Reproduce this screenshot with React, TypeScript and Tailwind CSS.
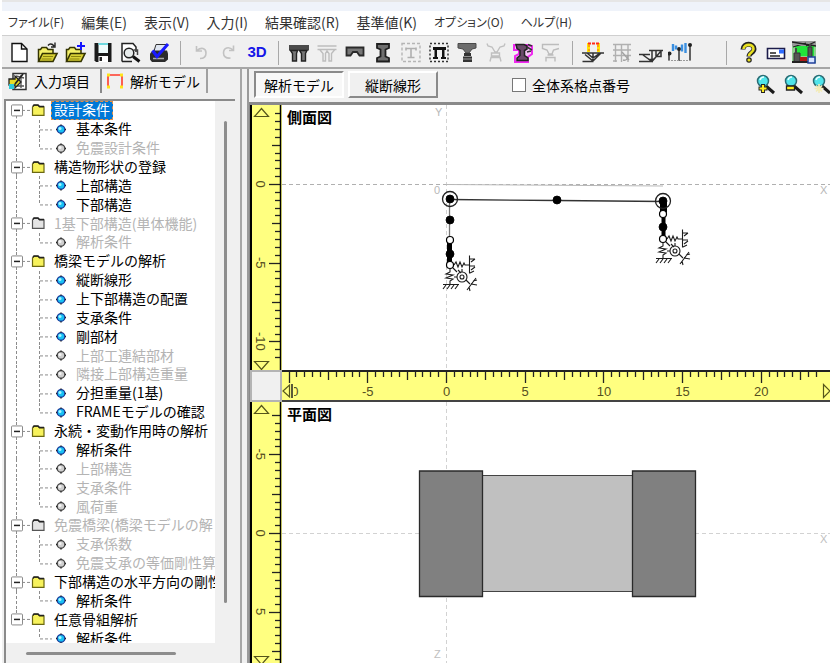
import { useState } from 'react'
import type { ReactNode } from 'react'

type Leaf  = { label: string; off?: boolean }
type Group = { label: string; off?: boolean; items: Leaf[] }

const MENUS = [
  { label: 'ファイル(F)', kana: true },
  { label: '編集(E)' },
  { label: '表示(V)' },
  { label: '入力(I)' },
  { label: '結果確認(R)' },
  { label: '基準値(K)' },
  { label: 'オプション(O)', kana: true },
  { label: 'ヘルプ(H)', kana: true },
]

const TREE: Group[] = [
  { label: '設計条件', items: [{ label: '基本条件' }, { label: '免震設計条件', off: true }] },
  { label: '構造物形状の登録', items: [{ label: '上部構造' }, { label: '下部構造' }] },
  { label: '1基下部構造(単体機能)', off: true, items: [{ label: '解析条件', off: true }] },
  {
    label: '橋梁モデルの解析',
    items: [
      { label: '縦断線形' },
      { label: '上下部構造の配置' },
      { label: '支承条件' },
      { label: '剛部材' },
      { label: '上部工連結部材', off: true },
      { label: '隣接上部構造重量', off: true },
      { label: '分担重量(1基)' },
      { label: 'FRAMEモデルの確認' },
    ],
  },
  {
    label: '永続・変動作用時の解析',
    items: [
      { label: '解析条件' },
      { label: '上部構造', off: true },
      { label: '支承条件', off: true },
      { label: '風荷重', off: true },
    ],
  },
  {
    label: '免震橋梁(橋梁モデルの解',
    off: true,
    items: [{ label: '支承係数', off: true }, { label: '免震支承の等価剛性算', off: true }],
  },
  { label: '下部構造の水平方向の剛性', items: [{ label: '解析条件' }] },
  { label: '任意骨組解析', items: [{ label: '解析条件' }] },
]

/* ---------- toolbar icons ---------- */

const Icon = ({ children }: { children: ReactNode }) => (
  <svg width="24" height="24" viewBox="0 0 24 24" fill="none" className="shrink-0">{children}</svg>
)

const NewIcon = () => (
  <Icon>
    <path d="M5 2.5h9.5L20 8v12.5H5z" fill="#fff" stroke="#111" strokeWidth="1.4" />
    <path d="M14.5 2.5V8H20" stroke="#111" strokeWidth="1.4" />
  </Icon>
)

const FolderShape = () => (
  <>
    <path d="M3.5 20V8.5h2L7 6.5h4.5l1.5 2h5V13" fill="#f4f06a" stroke="#333300" strokeWidth="1.5" />
    <path d="M3.5 20.5 7.5 12.5H22l-4 8z" fill="#d8d034" stroke="#333300" strokeWidth="1.6" />
    <path d="M8 15.5h10M6.5 18h10" stroke="#8a8410" strokeWidth="1" />
  </>
)

const OpenIcon = () => (
  <Icon>
    <FolderShape />
    <path d="M13 4.5c1.5-2 4-2 6 .5M20 1.5V6h-4" stroke="#222" strokeWidth="1.4" />
  </Icon>
)

const OpenAddIcon = () => (
  <Icon>
    <FolderShape />
    <path d="M18 1v8M14 5h8" stroke="#1414ff" strokeWidth="2" />
  </Icon>
)

const SaveIcon = () => (
  <Icon>
    <path d="M3.5 2h17v19H5l-1.5-1.5z" fill="#1a1a1a" />
    <path d="M7.5 2h9.5v10H7.5z" fill="#effcfc" />
    <path d="M7.5 2h9.5v2H7.5z" fill="#6fd9df" />
    <path d="M7.500 15h9.500v6h-9.500z" fill="#fff" />
    <path d="M8.500 16h2.500v4h-2.500z" fill="#222" />
  </Icon>
)

const PreviewIcon = () => (
  <Icon>
    <path d="M3 20.500V2.500h11l3 3.500v5M3 20.500h10" fill="#fff" stroke="#222" strokeWidth="1.500" />
    <circle cx="10" cy="12" r="4.800" fill="#e8ecec" stroke="#222" strokeWidth="1.500" />
    <path d="m14 15.500 6.500 5" stroke="#111" strokeWidth="3" />
    <path d="M14.500 9h4v5" stroke="#444" strokeWidth="1.500" />
  </Icon>
)

const PrintIcon = () => (
  <Icon>
    <path d="M3 12.500 6 9.500h14l1 3v6L18 21H5l-2-2.500z" fill="#2c2c2c" />
    <path d="M7 10 9 3.500h10L17 10z" fill="#dfe6f2" stroke="#333" strokeWidth="1" />
    <path d="M6 17.500h11" stroke="#aaa" strokeWidth="1.500" />
    <path d="m5.500 9.500 4.500 6L21 3" stroke="#1a1aff" strokeWidth="3" />
  </Icon>
)

const UndoIcon = () => (
  <Icon>
    <path d="M7.500 5v5H13M8 9.500c4-3.500 9-2.500 9 2.500 0 3.500-2.500 5.500-6 5.500" stroke="#c2c2c2" strokeWidth="1.600" />
  </Icon>
)

const RedoIcon = () => (
  <Icon>
    <path d="M16.500 4.500v5H12M16 9C12 5 6.500 6.500 6.500 12c0 3.500 2.500 5.500 7 5" stroke="#c2c2c2" strokeWidth="1.600" />
  </Icon>
)

const PierPairIcon = ({ off = false }: { off?: boolean }) => (
  <Icon>
    {off ? (
      <path d="M2.500 5h19M2.500 8.500h19M5 9l3 3.500V20h2.500v-7.500L12 10l2 2.500V20h2.500v-7.500L19.500 9" stroke="#bdbdbd" strokeWidth="1.400" />
    ) : (
      <>
        <path d="M2 4h20v5.500H2z" fill="#4a4a4a" />
        <path d="M3.500 9.500h7l-1 3V20h-4v-7.500zM12.500 9.500h7.500l-1.500 3V20h-4v-7.500z" fill="#777" stroke="#222" strokeWidth="1.400" />
      </>
    )}
  </Icon>
)

const ArchIcon = () => (
  <Icon>
    <path d="M3.500 6.500h17v8h-4L14 11h-4l-2.500 3.500h-4z" fill="#777" stroke="#2a2a2a" strokeWidth="1.800" />
  </Icon>
)

const ColumnIcon = () => (
  <Icon>
    <path d="M6 3h12v4l-3.500 1.500v7L18 17v3.500H6V17l3.500-1.500v-7L6 7z" fill="#6e6e6e" stroke="#1f1f1f" strokeWidth="1.800" />
  </Icon>
)

const FrameTIcon = () => (
  <Icon>
    <path d="M3 2.500h18v18H3z" stroke="#b5b5b5" strokeWidth="1.400" strokeDasharray="3 2" />
    <path d="M7 7.500h10M7 6.500v3M17 6.500v3M12 7.500v8.500M8.500 16.500h7" stroke="#b0b0b0" strokeWidth="1.600" />
  </Icon>
)

const FramePiIcon = () => (
  <Icon>
    <path d="M3 2.500h18v18H3z" stroke="#333" strokeWidth="1.500" strokeDasharray="2 2" />
    <path d="M6 6h13v3h-1.500v7h1.500v2h-5v-2h1V9h-5v7h1v2H6v-2h1.500V9H6z" fill="#111" />
  </Icon>
)

const BearingIcon = () => (
  <Icon>
    <path d="M3 2.500h18V7l-4 1-3 4h-3L8 8 3 7z" fill="#6d6d6d" stroke="#4a4a4a" />
    <path d="M9 12h7v3H9zM8 15.500h9v5.500H8z" fill="#333" />
    <path d="M8 18h9" stroke="#999" />
  </Icon>
)

const BearingOffIcon = () => (
  <Icon>
    <path d="M4 2.500 5 5l4 1 3 5h2l3-5 4-1 1-2.500M8.500 12h8v3h-8zM7 20.500l1-4h9l1 4" stroke="#c0c0c0" strokeWidth="1.400" />
  </Icon>
)

const SeismicIcon = () => (
  <Icon>
    <path d="M3 4h13l5 1v8l-4 3v5H4v-6l4-2V9H3z" fill="#f6c3f6" stroke="#f028f0" strokeWidth="2" />
    <path d="M5 3.500h8l3 1.500v3l-2.500 1.500v5L17 17v2.500H6V17l3-2.500v-5L6 7.500z" fill="#6a4a6a" stroke="#222" strokeWidth="1.500" />
    <path d="M16 6l5 3M16 11l4-1M17 3.500l4 1.500" stroke="#333" strokeWidth="1.500" />
  </Icon>
)

const StepOffIcon = () => (
  <Icon>
    <path d="M20 3.500H3.500v4L8 9l2 4h3l1.500-4L20 7.500M8.500 14h6M7 20.500v-4h9v4" stroke="#bcbcbc" strokeWidth="1.400" />
  </Icon>
)

const MomentShape = () => (
  <path d="M1 12h22M4 13.500l8 6.500 8-8M12 12v8M6 12l6 5 7-5M1.500 20.500h11" stroke="#333" strokeWidth="1.500" />
)

const MomentFrameIcon = () => (
  <Icon>
    <path d="M7.500 2v9M17.500 2v9" stroke="#ffe600" strokeWidth="3" />
    <path d="M7 2.500h11" stroke="#ff2a1a" strokeWidth="2" strokeDasharray="3 1" />
    <path d="M8 4v6M17 4v6" stroke="#ff5a1a" strokeDasharray="2 2" />
    <MomentShape />
  </Icon>
)

const GridOffIcon = () => (
  <Icon>
    <path d="M3 3.500h18M3 9h18M3 14.500h18M3 20h4M5.500 3v18M11.500 3v18M18 3v18" stroke="#b0b0b0" strokeWidth="1.400" />
    <path d="m12 11 7 8M13 19c3 1 5-1 5-5" stroke="#a2a2a2" strokeWidth="1.400" />
  </Icon>
)

const MomentIcon = () => (
  <Icon>
    <path d="M10 9.500h14M0 13.500h11M0 20.500h14M4 14l9 6.500L22 10M13 9.500v11M17 9.500v6h5v-6" stroke="#333" strokeWidth="1.500" />
    <path d="m9 18 4 2.500 2-3z" fill="#333" />
  </Icon>
)

const GraphIcon = () => (
  <Icon>
    <path d="M1 13v6M11 7v13M22 4v16" stroke="#333" strokeWidth="1.500" />
    <circle cx="1.500" cy="12.500" r="2" fill="#222" />
    <circle cx="11" cy="8" r="2" fill="#222" />
    <circle cx="22" cy="4" r="2" fill="#222" />
    <path d="M5 3v7M8 4.500v4M14 3.500v7M17.500 2v10" stroke="#3a8fe0" strokeWidth="2.400" />
    <path d="M0 19.500h24" stroke="#9a9a9a" strokeDasharray="2 1" />
  </Icon>
)

const HelpIcon = () => (
  <Icon>
    <path d="M7 8.500C7 1.500 18 1.500 18 8c0 4-5 3.500-5 7.500" stroke="#222" strokeWidth="5" />
    <path d="M7.500 8C8 2.500 17.500 2.500 17.500 8c0 3.500-4.500 3.500-4.500 7" stroke="#e8e020" strokeWidth="2.600" />
    <circle cx="13" cy="19" r="2.200" fill="#e8e020" stroke="#222" strokeWidth="1.200" />
  </Icon>
)

const CardIcon = () => (
  <Icon>
    <path d="M3.500 7.500h17v10h-17z" fill="#fff" stroke="#1c1c4a" strokeWidth="1.600" />
    <path d="M15 8.500h5v4h-5z" fill="#2e6bff" />
    <path d="M6 12h6M6 15h10" stroke="#222" strokeWidth="1.300" />
  </Icon>
)

const SceneIcon = () => (
  <Icon>
    <path d="M0 0h24v22H0z" fill="#8fd08f" />
    <path d="M0 0h24v5H0z" fill="#9a9a9a" />
    <path d="M3 5h19v10H3z" fill="#22e33a" />
    <path d="M0 1 24 5M1 6 14 2M14 5l9-4" stroke="#222" strokeWidth="1.300" />
    <path d="M2 12h6v9H2zM16 6h4v10h-4z" fill="#555" stroke="#333" />
    <path d="M4 7v6M18 3v4" stroke="#444" strokeWidth="2" />
    <path d="M8 16h7v6H8z" fill="#b01818" />
    <path d="M0 20h16v2H0z" fill="#222" />
    <path d="M16 16h7v6h-7z" fill="#d8e4ff" stroke="#1f3f9c" strokeWidth="1.500" />
  </Icon>
)

/* lens with a small mark at its foot */
const LensIcon = ({ mark }: { mark: 'plus' | 'minus' | 'spark' }) => (
  <svg width="22" height="24" viewBox="0 0 22 24" fill="none" className="shrink-0">
    <path d="m12 13 8 7" stroke="#1a1a1a" strokeWidth="3" />
    <circle cx="9" cy="8" r="5.500" fill="#4fe4ea" stroke="#2c6c74" strokeWidth="1.500" />
    <path d="M6 7c.5-2 2-3 4-3" stroke="#e8ffff" strokeWidth="1.500" />
    {mark === 'plus' && (
      <>
        <path d="M9 11v9M4.500 15.500h9" stroke="#222" strokeWidth="4" />
        <path d="M9 12v7M5.500 15.500h7" stroke="#ffee22" strokeWidth="2.200" />
      </>
    )}
    {mark === 'minus' && <path d="M4.500 13h8v4h-8z" fill="#ffee22" stroke="#222" strokeWidth="1.300" />}
    {mark === 'spark' && <path d="M9 11v9M4.500 15.500h9M6 12.500l6 6M12 12.500l-6 6" stroke="#f3ecb8" strokeWidth="1.600" />}
  </svg>
)

const InputIcon = () => (
  <svg width="20" height="20" viewBox="0 0 20 20" fill="none">
    <path d="M5 2.500h13v16H5z" fill="#fff" stroke="#333" strokeWidth="1.500" />
    <path d="M8 5l8 2M8 15h8M13 4v13" stroke="#555" strokeWidth="1.300" />
    <path d="M1 8h6V5l6 6-6 6v-3H1z" fill="#e8dc28" stroke="#222" strokeWidth="1.300" />
    <path d="M1 13h5v5H1z" fill="#30c8d8" />
    <path d="m7 13 8-10" stroke="#222" strokeWidth="1.800" />
  </svg>
)

const ModelIcon = () => (
  <svg width="18" height="18" viewBox="0 0 18 18" fill="none">
    <path d="M2 15V3h14v12" stroke="#ff3a2a" strokeWidth="1.600" />
    <path d="M1 1.500h3v3H1zM14 1.500h3v3h-3zM1 13.500h3v3H1zM14 13.500h3v3h-3z" fill="#ffe51a" />
  </svg>
)

const Sep = ({ wide = false }: { wide?: boolean }) => (
  <div className={`flex justify-center shrink-0 ${wide ? 'w-10' : 'w-3.5'}`}>
    <div className="w-px h-6 bg-[#a8a8a8]" />
  </div>
)

const Tool = ({ name, children }: { name: string; children: ReactNode }) => (
  <button type="button" aria-label={name} className="w-7 h-7 flex items-center justify-center shrink-0">
    {children}
  </button>
)

function Toolbar() {
  return (
    <div className="h-[34px] pl-[3px] pt-[2px] flex items-center bg-[#f0f0f0] border-t border-b-2 border-t-[#cfcfcf] border-b-[#a6a6a6]">
      <Tool name="新規"><NewIcon /></Tool>
      <Tool name="開く"><OpenIcon /></Tool>
      <Tool name="追加"><OpenAddIcon /></Tool>
      <Tool name="保存"><SaveIcon /></Tool>
      <Tool name="プレビュー"><PreviewIcon /></Tool>
      <Tool name="印刷"><PrintIcon /></Tool>
      <Sep />
      <Tool name="元に戻す"><UndoIcon /></Tool>
      <Tool name="やり直し"><RedoIcon /></Tool>
      <button type="button" className="w-7 h-7 shrink-0 font-['Liberation_Sans',sans-serif] font-bold text-[15px] text-[#1515e8]">3D</button>
      <Sep />
      <Tool name="橋脚"><PierPairIcon /></Tool>
      <Tool name="橋脚2"><PierPairIcon off /></Tool>
      <Tool name="上部"><ArchIcon /></Tool>
      <Tool name="柱"><ColumnIcon /></Tool>
      <Tool name="枠T"><FrameTIcon /></Tool>
      <Tool name="枠"><FramePiIcon /></Tool>
      <Tool name="支承"><BearingIcon /></Tool>
      <Tool name="支承2"><BearingOffIcon /></Tool>
      <Tool name="地震"><SeismicIcon /></Tool>
      <Tool name="段差"><StepOffIcon /></Tool>
      <Sep />
      <div className="flex gap-px">
        <Tool name="断面力"><MomentFrameIcon /></Tool>
        <Tool name="表"><GridOffIcon /></Tool>
        <Tool name="モーメント"><MomentIcon /></Tool>
        <Tool name="グラフ"><GraphIcon /></Tool>
      </div>
      <div className="w-3 shrink-0" />
      <Sep wide />
      <div className="flex -ml-3">
        <Tool name="ヘルプ"><HelpIcon /></Tool>
        <Tool name="連絡"><CardIcon /></Tool>
        <Tool name="画面"><SceneIcon /></Tool>
      </div>
    </div>
  )
}

/* ---------- tree ---------- */

const DASH = { stroke: '#8c8c8c', strokeWidth: 1, strokeDasharray: '3 2' }

function GroupLines({ off, first, last }: { off?: boolean; first: boolean; last: boolean }) {
  return (
    <svg className="w-11 h-full shrink-0" fill="none">
      <line x1="9.5" x2="9.5" y1={first ? '50%' : '0'} y2={last ? '50%' : '100%'} {...DASH} />
      <svg y="50%" overflow="visible">
        <path d="M15 0h9" {...DASH} />
        <rect x="4.500" y="-5.500" width="11" height="11" rx="1" fill="#fff" stroke="#8a8a8a" />
        <path d="M7 0h6" stroke="#222" strokeWidth="1.500" />
        <path d="M25.500 5V-3.500l1.500-1.500h4l1.500 1.500H37V5z" fill={off ? '#e4e4e4' : '#f7f25c'} stroke={off ? '#555' : '#6b6812'} strokeWidth="1.200" />
        <path d="M26 -4l1-1.500h4l1.500 1.500H37" stroke="#222" strokeWidth="1.500" />
      </svg>
    </svg>
  )
}

function LeafLines({ off, trunk, last }: { off?: boolean; trunk: boolean; last: boolean }) {
  return (
    <svg className="w-[66px] h-full shrink-0" fill="none">
      {trunk && <line x1="9.5" x2="9.5" y1="0" y2="100%" {...DASH} />}
      <line x1="32.5" x2="32.5" y1="0" y2={last ? '50%' : '100%'} {...DASH} />
      <svg y="50%" overflow="visible">
        <path d="M33 0.500h12" {...DASH} />
        <circle cx="54" cy="0" r="3.800" fill={off ? '#cfcfcf' : '#18c0f4'} stroke={off ? '#444' : '#183a9a'} strokeWidth="1.300" />
        <path d="M54 -5v1M54 4v1M49 0h1M58 0h1" stroke="#222" strokeWidth="1.500" />
        <circle cx="53" cy="-1" r="1.500" fill={off ? '#f4f4f4' : '#a8f4ff'} />
      </svg>
    </svg>
  )
}

function TreeLabel({ label, off, active, onPick }: { label: string; off?: boolean; active: boolean; onPick: () => void }) {
  const tone = active
    ? 'bg-[#0078d7] text-white outline-1 -outline-offset-1 outline-dashed outline-[#e0904a]'
    : off ? 'text-[#b4b4b4]' : 'text-black'
  return (
    <button type="button" onClick={onPick} className={`h-full px-[3px] pb-[2px] leading-4 whitespace-nowrap ${tone}`}>
      {label}
    </button>
  )
}

function Tree() {
  const [picked, setPicked] = useState('0')

  return (
    <div className="flex-1 min-h-0 ml-[2px] mr-[5px] flex flex-col bg-[#f0f0f0] border-t-2 border-l-2 border-[#8a8a8a]">
      <div className="flex-1 min-h-0 flex">
        <div className="flex-1 min-w-0 bg-white overflow-hidden">
          <ul className="h-[547px] ml-px grid auto-rows-fr text-sm">
            {TREE.flatMap((g, gi) => [
              <li key={gi} className="flex min-h-0">
                <GroupLines off={g.off} first={gi === 0} last={gi === TREE.length - 1} />
                <TreeLabel label={g.label} off={g.off} active={picked === `${gi}`} onPick={() => setPicked(`${gi}`)} />
              </li>,
              ...g.items.map((leaf, li) => (
                <li key={`${gi}-${li}`} className="flex min-h-0">
                  <LeafLines off={leaf.off} trunk={gi < TREE.length - 1} last={li === g.items.length - 1} />
                  <TreeLabel
                    label={leaf.label}
                    off={leaf.off}
                    active={picked === `${gi}-${li}`}
                    onPick={() => setPicked(`${gi}-${li}`)}
                  />
                </li>
              )),
            ])}
          </ul>
        </div>
        {/* vertical scroll thumb */}
        <div className="w-5 shrink-0 pt-5 pb-10 flex justify-center">
          <div className="w-[3px] h-full rounded bg-[#8d8d8d]" />
        </div>
      </div>
      <div className="h-5 shrink-0 pl-5 flex items-center">
        <div className="w-[150px] h-[3px] rounded bg-[#8d8d8d]" />
      </div>
    </div>
  )
}

/* ---------- rulers ---------- */

const STEP = 7.87 // half a metre on screen

const tickLength = (n: number) => (n % 10 === 0 ? 11 : n % 5 === 0 ? 8 : 5)

// dir: 1 when values grow downwards, -1 when they grow upwards
function VerticalRuler({ zero, from, to, dir, height }: { zero: number; from: number; to: number; dir: 1 | -1; height: number }) {
  const ticks = Array.from({ length: to - from + 1 }, (_, i) => from + i)
  return (
    <svg className="w-full h-full bg-[#ffff80]" fill="none">
      {ticks.map(n => {
        const y = Math.round(zero + n * STEP) + 0.5
        return <line key={n} x1={30 - tickLength(n)} x2="30" y1={y} y2={y} stroke="#222" strokeWidth="1.300" />
      })}
      {ticks.filter(n => n % 10 === 0).map(n => (
        <text
          key={n}
          transform={`translate(6 ${zero + n * STEP}) rotate(90)`}
          textAnchor="middle"
          className="font-['Liberation_Sans',sans-serif] text-[13px]"
          fill="#554f20"
        >
          {(n * dir) / 2}
        </text>
      ))}
      <path d="M2 0h16v13H2z" fill="#ffff80" />
      <path d="M4.500 11.500h14l-7-8z" stroke="#55551a" strokeWidth="1.200" />
      <path d={`M2 ${height - 11}h17v11H2z`} fill="#ffff80" />
      <path d={`M4.500 ${height - 9.5}h14l-7 8z`} stroke="#55551a" strokeWidth="1.200" />
      <line x1="1" x2="1" y1="0" y2="100%" stroke="#000" strokeWidth="2" />
      <line x1="30.500" x2="30.500" y1="0" y2="100%" stroke="#000" strokeWidth="1.500" />
    </svg>
  )
}

function HorizontalRuler() {
  const ticks = Array.from({ length: 69 }, (_, i) => i - 20)
  return (
    <div className="flex min-w-0 bg-[#ffff80] border-t-2 border-b-2 border-t-[#222] border-b-[#444]">
      <svg className="flex-1 min-w-0 h-full" fill="none">
        {ticks.map(n => {
          const x = Math.round(164 + n * STEP) + 0.5
          return <line key={n} x1={x} x2={x} y1="0" y2={tickLength(n)} stroke="#222" strokeWidth="1.300" />
        })}
        {ticks.filter(n => n % 10 === 0).map(n => (
          <text key={n} x={164.5 + n * STEP} y="24" textAnchor="middle" className="font-['Liberation_Sans',sans-serif] text-[13px]" fill="#554f20">
            {n / 2}
          </text>
        ))}
        <path d="M0 11h12v16H0z" fill="#ffff80" />
        <path d="M7.500 13v12L1 19z" stroke="#55551a" strokeWidth="1.200" />
        <path d="M10 12v14" stroke="#222" strokeWidth="1.500" />
      </svg>
      <svg width="8" height="28" fill="none" className="shrink-0 bg-[#ffff80]">
        <path d="M1.500 12.500v13L8 19z" stroke="#55551a" strokeWidth="1.200" />
      </svg>
    </div>
  )
}

/* ---------- drawings ---------- */

const AXIS = { stroke: '#d2d2d2', strokeDasharray: '4 3' }

// ground springs in x, y and rotation, hung from the foot node
const Support = ({ x, y }: { x: number; y: number }) => (
  <g transform={`translate(${x} ${y})`} stroke="#1c1c1c" strokeWidth="1.100">
    <path d="M4 0l2-3 2 5 2-5 2 5 2-4 1 2h5" />
    <path d="M19.500-9.500v18M20-6h5M21-3l4-3M20 1h5M21 5l4-3M20 8l4-2" />
    <path d="M0 4v3l-4 2 7 1-7 3 7 1-3 2v4M-7 19.500h16M-4 20l-3 4M0 20l-3 4M4 20l-3 4M8 20l-3 4" />
    <path d="M3 3l4 4M16 15l4 4M26 13l-9 12M21 19l6 1M23 16l4-1M19 22l1 4M8 5l3 3" />
    <circle cx="12" cy="12" r="5" />
    <circle cx="12" cy="12" r="2" />
    <path d="M7 12h-3M12 7V4" />
  </g>
)

const Node = ({ x, y, open = false }: { x: number; y: number; open?: boolean }) => (
  <circle cx={x} cy={y} r={open ? 3.5 : 4} fill={open ? '#fff' : '#000'} stroke="#000" strokeWidth={open ? 1.2 : 0.8} />
)

function SideView() {
  return (
    <svg className="w-full h-full" fill="none">
      <line x1="164.500" x2="164.500" y1="0" y2="100%" {...AXIS} />
      <line x1="0" x2="100%" y1="79.500" y2="79.500" {...AXIS} stroke="#b0b0b0" />
      <path d="M164 79.500 381 81" stroke="#b8b8b8" />
      <g className="font-['Liberation_Sans',sans-serif] text-[11px]" fill="#b8b8b8">
        <text x="153" y="11">Y</text>
        <text x="152" y="89">0</text>
        <text x="538" y="89">X</text>
      </g>
      <path d="M168 94.500 275 95.500 382 96.500" stroke="#333" strokeWidth="1.300" />
      <path d="M167.500 94v40" stroke="#777" strokeWidth="1.300" />
      <path d="M167.500 137v20" stroke="#000" strokeWidth="5" />
      <path d="M381.500 96v13" stroke="#000" strokeWidth="7" />
      <path d="M381.500 112v20" stroke="#000" strokeWidth="4" />
      <Support x={168} y={160} />
      <Support x={381} y={134} />
      <circle cx="168" cy="94" r="7.500" stroke="#222" strokeWidth="1.300" />
      <circle cx="381" cy="96" r="7.500" stroke="#222" strokeWidth="1.300" />
      <Node x={168} y={94} />
      <Node x={168} y={115} />
      <Node x={168} y={135} open />
      <Node x={168} y={149} />
      <Node x={168} y={160} open />
      <Node x={275} y={95} />
      <Node x={381} y={96} />
      <Node x={381} y={109} open />
      <Node x={381} y={122} />
      <Node x={381} y={134} open />
    </svg>
  )
}

function PlanView() {
  return (
    <svg className="w-full h-full" fill="none">
      <line x1="164.500" x2="164.500" y1="0" y2="100%" {...AXIS} />
      <line x1="0" x2="100%" y1="131.500" y2="131.500" {...AXIS} />
      <g className="font-['Liberation_Sans',sans-serif] text-[11px]" fill="#c0c0c0">
        <text x="538" y="141">X</text>
        <text x="152" y="256">Z</text>
      </g>
      <path d="M200 73.500h151v116H200z" fill="#c0c0c0" stroke="#444" />
      <path d="M137.500 69h63v125.500h-63zM350.500 69h63v125.500h-63z" fill="#808080" stroke="#2a2a2a" strokeWidth="1.300" />
    </svg>
  )
}

function Pane({ title, children }: { title: string; children: ReactNode }) {
  return (
    <section className="relative min-w-0 min-h-0 overflow-hidden bg-white">
      {children}
      <h2 className="absolute top-px left-[5px] text-[15px] leading-[22px] font-bold">{title}</h2>
    </section>
  )
}

function Viewer() {
  const [mode, setMode] = useState('解析モデル')

  return (
    <main className="flex-1 min-w-0 flex flex-col border-l-2 border-[#9a9a9a]">
      <div className="h-9 shrink-0 pl-[5px] pb-[2px] flex items-center gap-1 bg-[#f0f0f0] border-b-[3px] border-[#8a8a8a] overflow-hidden">
        {['解析モデル', '縦断線形'].map(m => (
          <button
            key={m}
            type="button"
            onClick={() => setMode(m)}
            className={`w-[90px] h-[27px] shrink-0 text-sm leading-5 border-2 ${
              mode === m
                ? 'bg-[#f8f8f8] border-t-[#8a8a8a] border-l-[#8a8a8a] border-b-white border-r-white'
                : 'bg-[#f0f0f0] border-t-white border-l-white border-b-[#8a8a8a] border-r-[#8a8a8a]'
            }`}
          >
            {m}
          </button>
        ))}
        <label className="ml-[70px] flex items-center gap-1.5 shrink-0 text-sm">
          <input type="checkbox" className="appearance-none w-3.5 h-3.5 bg-white border border-[#777] checked:bg-[#0078d7]" />
          全体系格点番号
        </label>
        <div className="ml-auto flex gap-1.5 -mr-0.5">
          <button type="button" aria-label="拡大"><LensIcon mark="plus" /></button>
          <button type="button" aria-label="縮小"><LensIcon mark="minus" /></button>
          <button type="button" aria-label="全体"><LensIcon mark="spark" /></button>
        </div>
      </div>

      <div className="flex-1 min-h-0 grid grid-cols-[32px_minmax(0,1fr)] grid-rows-[265px_32px_minmax(0,1fr)] border-l border-[#8a8a8a]">
        <VerticalRuler zero={79} from={-9} to={22} dir={-1} height={266} />
        <Pane title="側面図"><SideView /></Pane>
        <div className="border-2 border-[#b4b4b4] bg-[#f0f0f0]" />
        <HorizontalRuler />
        <VerticalRuler zero={131} from={-15} to={16} dir={1} height={264} />
        <Pane title="平面図"><PlanView /></Pane>
      </div>
    </main>
  )
}

export default function App() {
  return (
    <div className="h-screen pl-[2px] pr-[7px] flex flex-col overflow-hidden bg-white text-black font-['Noto_Sans_CJK_JP',sans-serif]">
      <div className="h-[11px] shrink-0 bg-[#eff3fa] border-t-2 border-[#e6e6e6]" />
      <nav className="h-6 shrink-0 pl-1.5 pb-[2px] flex items-center gap-[17px] text-[#333] [font-feature-settings:'palt']">
        {MENUS.map(m => (
          <button key={m.label} type="button" className={`leading-5 whitespace-nowrap ${m.kana ? 'text-xs' : 'text-sm'}`}>
            {m.label}
          </button>
        ))}
      </nav>
      <Toolbar />
      <div className="flex-1 min-h-0 flex bg-[#f0f0f0]">
        <aside className="w-[238px] shrink-0 flex flex-col">
          <div className="h-[30px] shrink-0 pl-1.5 pb-1.5 flex items-center text-sm">
            <button type="button" className="h-6 pr-2.5 flex items-center gap-1.5 border-r-2 border-[#8a8a8a]">
              <InputIcon />入力項目
            </button>
            <button type="button" className="h-6 pl-1 pr-1.5 flex items-center gap-1.5 border-r-2 border-[#a0a0a0]">
              <ModelIcon />解析モデル
            </button>
          </div>
          <Tree />
        </aside>
        <div className="w-[7px] shrink-0 border-l-2 border-[#a6a6a6]" />
        <Viewer />
      </div>
    </div>
  )
}
